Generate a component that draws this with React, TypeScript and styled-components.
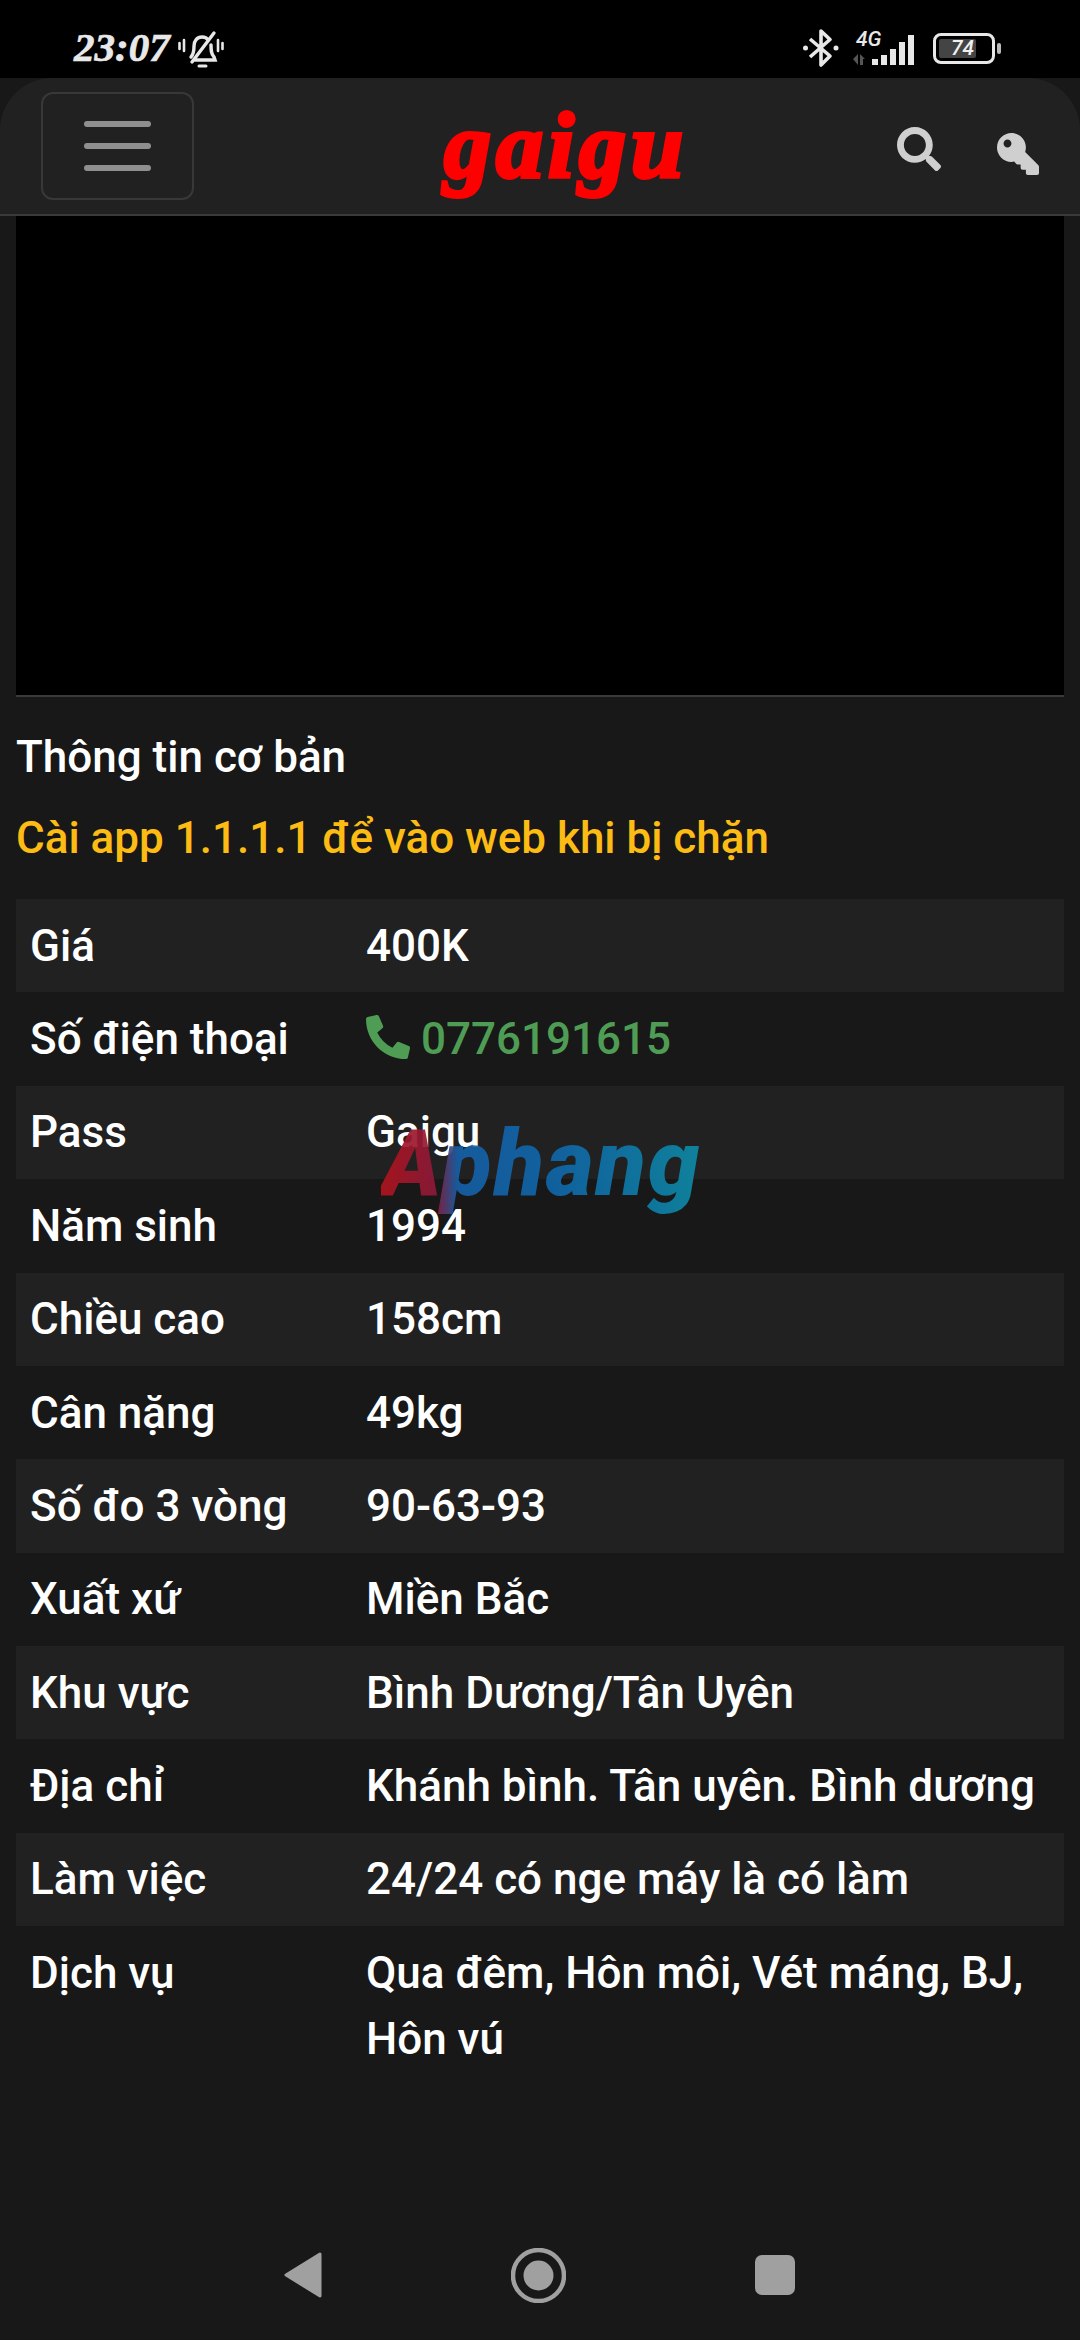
import React from "react";
import styled, { createGlobalStyle } from "styled-components";
import { FaKey, FaPhoneAlt, FaSearch } from "react-icons/fa";

const Global = createGlobalStyle`
  html, body { margin: 0; padding: 0; background: #181818; }
  * { box-sizing: border-box; }
`;

const Page = styled.div`
  width: 1080px;
  height: 2340px;
  display: flex;
  flex-direction: column;
  background: #181818;
  color: #fff;
  font-family: Roboto, "Noto Sans", sans-serif;
  overflow: hidden;
  position: relative;
`;

const StatusBar = styled.div`
  height: 78px;
  background: #000;
  display: flex;
  align-items: flex-start;
  padding: 28px 85px 0 74px;
  color: #e8e8e8;
`;

const Time = styled.span`
  font: italic bold 41px/38px "Liberation Serif", serif;
  -webkit-text-stroke: 0.7px #e8e8e8;
  width: 104px;
  white-space: nowrap;
`;

const StatusRight = styled.div`
  margin-left: auto;
  display: flex;
  align-items: flex-start;
  gap: 14px;
`;

const Network = styled.div`
  position: relative;
  width: 66px;
  height: 36px;
  margin-top: 2px;
`;

const FourG = styled.span`
  position: absolute;
  left: 3px;
  top: 0;
  font: italic 500 21px/18px Roboto, sans-serif;
  color: #e8e8e8;
`;

const Battery = styled.div`
  width: 62px;
  height: 31px;
  margin: 5px 0 0 0;
  border: 3px solid #e8e8e8;
  border-radius: 8px;
  padding: 3px;
  position: relative;
  display: flex;
`;

const BatteryFill = styled.div`
  width: 74%;
  background: #444;
  border-radius: 2px;
`;

const BatteryText = styled.span`
  position: absolute;
  left: 15px;
  top: 0;
  font: italic 500 21px/24px Roboto, sans-serif;
  color: #f0f0f0;
`;

const BatteryNub = styled.div`
  position: absolute;
  right: -9px;
  top: 7px;
  width: 4px;
  height: 11px;
  background: #bbb;
  border-radius: 2px;
`;

const Header = styled.header`
  height: 138px;
  background: #212121;
  border-bottom: 2px solid #3a3a3a;
  border-radius: 52px 52px 0 0;
  display: flex;
  align-items: flex-start;
  padding: 14px 41px 0 41px;
  position: relative;
`;

const MenuButton = styled.div`
  width: 153px;
  height: 108px;
  border: 2px solid #383838;
  border-radius: 12px;
  display: flex;
  flex-direction: column;
  align-items: center;
  justify-content: center;
  gap: 16px;
`;

const MenuBar = styled.span`
  width: 67px;
  height: 6px;
  border-radius: 3px;
  background: #8f8f8f;
`;

const Logo = styled.div`
  margin-left: 250px;
  margin-top: 6px;
  width: 245px;
  font: italic bold 94px/94px "Liberation Serif", serif;
  color: #f00;
  -webkit-text-stroke: 4px #f00;
  letter-spacing: 5px;
`;

const HeaderIcons = styled.div`
  margin-left: auto;
  display: flex;
  align-items: flex-start;
  gap: 56px;
  color: #cfcfcf;
  padding-top: 35px;
`;

const KeyWrap = styled.span`
  display: flex;
  transform: scaleX(-1);
  margin-top: 6px;
`;

const Main = styled.main`
  padding: 0 16px;
`;

const Video = styled.div`
  height: 481px;
  background: #000;
  border-bottom: 2px solid #3a3a3a;
`;

const Title = styled.div`
  font-size: 44px;
  line-height: 66px;
  font-weight: 500;
  margin-top: 27px;
`;

const Notice = styled(Title)`
  color: #fcbc14;
  margin-top: 15px;
`;

const Table = styled.div`
  margin-top: 28px;
`;

const Row = styled.div<{ $striped: boolean }>`
  display: grid;
  grid-template-columns: 336px 1fr;
  padding: 13.7px 14px;
  background: ${(p) => (p.$striped ? "#212121" : "transparent")};
  font-size: 44px;
  line-height: 66px;
  font-weight: 500;
`;

const PhoneLink = styled.span`
  color: #4f9d55;
  display: flex;
  align-items: center;
  gap: 11px;
`;

const Watermark = styled.div`
  position: absolute;
  left: 381px;
  top: 1112px;
  font: italic 900 92px/104px Roboto, "Liberation Sans", sans-serif;
  letter-spacing: 2px;
  opacity: 0.92;
  background: linear-gradient(90deg, #b0141c 0%, #8e1a3a 17%, #1560a8 24%, #1067a9 55%, #0e8aa6 100%);
  -webkit-background-clip: text;
  background-clip: text;
  color: transparent;
`;

const NavBar = styled.nav`
  margin-top: auto;
  height: 92px;
  margin-bottom: 19px;
  display: flex;
  align-items: center;
  padding: 0 285px 0 284px;
  justify-content: space-between;
  color: #a0a0a0;
`;

const rows: [string, React.ReactNode][] = [
  ["Giá", "400K"],
  ["Số điện thoại", <PhoneLink key="p"><FaPhoneAlt size={44} style={{ marginTop: -4 }} />0776191615</PhoneLink>],
  ["Pass", "Gaigu"],
  ["Năm sinh", "1994"],
  ["Chiều cao", "158cm"],
  ["Cân nặng", "49kg"],
  ["Số đo 3 vòng", "90-63-93"],
  ["Xuất xứ", "Miền Bắc"],
  ["Khu vực", "Bình Dương/Tân Uyên"],
  ["Địa chỉ", "Khánh bình. Tân uyên. Bình dương"],
  ["Làm việc", "24/24 có nge máy là có làm"],
  ["Dịch vụ", "Qua đêm, Hôn môi, Vét máng, BJ, Hôn vú"],
];

export default function App() {
  return (
    <Page>
      <Global />
      <StatusBar>
        <Time>23:07</Time>
        <svg width="46" height="40" viewBox="0 0 46 40" fill="none" stroke="#e8e8e8" strokeWidth="3.4" strokeLinecap="round" style={{ marginTop: 2 }}>
          <path d="M13 27c3-3 3-7 3-11 0-5 3-9 8-9 3 0 5 1 6 3M33 15c0 5 0 9 3 12l1 3H17" />
          <path d="M14 32L36 3" />
          <path d="M1.5 13v6M6 10v11M40 10v11M44.5 13v6" strokeWidth="2.6" />
          <path d="M21 36h7" strokeWidth="3" />
        </svg>
        <StatusRight>
          <svg width="36" height="40" viewBox="0 0 36 40" fill="none" stroke="#e8e8e8" strokeWidth="3.6" strokeLinejoin="round">
            <path d="M7 11l20 17-9 9V3l9 8.5L7 29" />
            <circle cx="2.5" cy="20" r="2.5" fill="#e8e8e8" stroke="none" />
            <circle cx="33" cy="20" r="2.5" fill="#e8e8e8" stroke="none" />
          </svg>
          <Network>
            <FourG>4G</FourG>
            <svg width="66" height="36" viewBox="0 0 66 36" fill="#e8e8e8">
              <path d="M19 29h6v6h-6zM28 25h6v10h-6zM37 19h6v16h-6zM46 12h6v23h-6zM55 5h6v30h-6z" />
              <path d="M0 29l5-5v11zM7 24l5 5h-2v6H7z" fill="#555" />
            </svg>
          </Network>
          <Battery>
            <BatteryFill />
            <BatteryText>74</BatteryText>
            <BatteryNub />
          </Battery>
        </StatusRight>
      </StatusBar>
      <Header>
        <MenuButton>
          <MenuBar />
          <MenuBar />
          <MenuBar />
        </MenuButton>
        <Logo>gaigu</Logo>
        <HeaderIcons>
          <FaSearch size={44} />
          <KeyWrap><FaKey size={42} /></KeyWrap>
        </HeaderIcons>
      </Header>
      <Main>
        <Video />
        <Title>Thông tin cơ bản</Title>
        <Notice>Cài app 1.1.1.1 để vào web khi bị chặn</Notice>
        <Table>
          {rows.map(([label, value], i) => (
            <Row key={label} $striped={i % 2 === 0 && i < 11}>
              <span>{label}</span>
              <span>{value}</span>
            </Row>
          ))}
        </Table>
      </Main>
      <Watermark>Aphang</Watermark>
      <NavBar>
        <svg width="38" height="46" viewBox="0 0 38 46" fill="currentColor" stroke="currentColor" strokeWidth="3" strokeLinejoin="round">
          <path d="M36 2L2 23l34 21z" />
        </svg>
        <svg width="55" height="55" viewBox="0 0 55 55" fill="none" stroke="currentColor">
          <circle cx="27.5" cy="27.5" r="25.5" strokeWidth="4.5" />
          <circle cx="27.5" cy="27.5" r="15" fill="currentColor" stroke="none" />
        </svg>
        <svg width="40" height="40" viewBox="0 0 40 40" fill="currentColor">
          <rect width="40" height="40" rx="7" />
        </svg>
      </NavBar>
    </Page>
  );
}
